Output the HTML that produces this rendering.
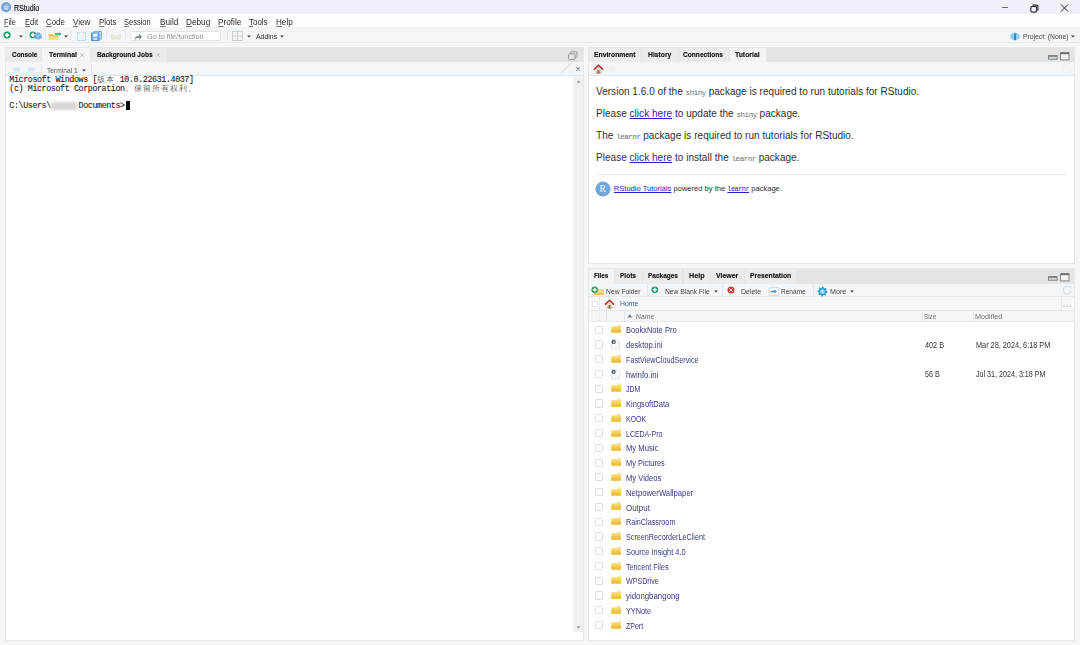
<!DOCTYPE html>
<html><head><meta charset="utf-8">
<style>
*{box-sizing:border-box;margin:0;padding:0}
html,body{width:1080px;height:645px;overflow:hidden;background:#f5f6f7;font-family:"Liberation Sans",sans-serif;color:#222;position:relative}
.a{position:absolute}
svg.a{overflow:visible}
.t{position:absolute;white-space:nowrap;transform-origin:0 0}
u{text-decoration:underline;text-decoration-thickness:0.5px;text-underline-offset:0.6px;text-decoration-color:#777}
.cjk{font-family:"Liberation Serif",serif;color:#6e6e6e;font-size:8.2px;letter-spacing:1.06px;-webkit-text-stroke:0}
.lnk{color:#2323c8;text-decoration:underline}
.gm{font-family:"Liberation Mono",monospace;color:#6a6a6a;font-size:7.5px;letter-spacing:-0.45px}
.gml{font-family:"Liberation Mono",monospace;font-size:6.9px;letter-spacing:-0.5px}
</style></head><body>
<div class="a" style="left:0px;top:0px;width:1080px;height:14px;background:#eef1fa"></div>
<svg class="a" style="left:1px;top:2px" width="11" height="11" viewBox="0 0 11 11"><circle cx="5.1" cy="5.2" r="5" fill="#6a9fd6"/><circle cx="5.1" cy="5.2" r="3.3" fill="#8fb8e4"/><text x="3.2" y="7.6" font-size="6" fill="#e8f0fa" font-family="Liberation Sans">R</text></svg>
<div class="a" style="left:1002px;top:7px;width:6px;height:1px;background:#6a6a6a"></div>
<svg class="a" style="left:1030px;top:3.5px" width="9" height="9" viewBox="0 0 9 9"><rect x="0.8" y="2.3" width="5.8" height="5.8" rx="1.4" fill="none" stroke="#333" stroke-width="1.2"/><path d="M2.5 1.2 L6.5 1.2 Q7.9 1.2 7.9 2.6 L7.9 6.5" fill="none" stroke="#333" stroke-width="1.2"/></svg>
<svg class="a" style="left:1060px;top:3.5px" width="9" height="8" viewBox="0 0 9 8"><path d="M1 0.5 L8 7.5 M8 0.5 L1 7.5" stroke="#222" stroke-width="1"/></svg>
<div class="a" style="left:0px;top:14px;width:1080px;height:12.5px;background:#fefefe"></div>
<div class="a" style="left:0px;top:26.5px;width:1080px;height:16.2px;background:#f3f5f6;border-bottom:1px solid #e6e8eb"></div>
<svg class="a" style="left:3.4px;top:30.6px" width="8.2" height="8.2" viewBox="0 0 8.2 8.2"><circle cx="4.1" cy="4.1" r="3.6" fill="#1e9a68"/><path d="M4.1 1.9399999999999995 L4.1 6.26 M1.9399999999999995 4.1 L6.26 4.1" stroke="#fff" stroke-width="1.80"/></svg>
<svg class="a" style="left:18.9px;top:34.8px" width="4" height="3" viewBox="0 0 4 3"><path d="M0.2 0.5 L3.8 0.5 L2 2.5 Z" fill="#333"/></svg>
<div class="a" style="left:25.3px;top:30px;width:1px;height:10px;background:#f0dfe4"></div>
<svg class="a" style="left:28.700000000000003px;top:30.5px" width="7.8" height="7.8" viewBox="0 0 7.8 7.8"><circle cx="3.9" cy="3.9" r="3.4" fill="#1e9a68"/><path d="M3.9 1.8599999999999999 L3.9 5.9399999999999995 M1.8599999999999999 3.9 L5.9399999999999995 3.9" stroke="#fff" stroke-width="1.70"/></svg>
<svg class="a" style="left:34px;top:32.3px" width="8" height="8" viewBox="0 0 8 8"><path d="M4 0.3 L7.6 2 L7.6 6 L4 7.7 L0.4 6 L0.4 2 Z" fill="#6fa8dc"/><path d="M4 3.8 L7.6 2 M4 3.8 L0.4 2 M4 3.8 L4 7.7" stroke="#c9e0f5" stroke-width="0.7"/></svg>
<div class="a" style="left:44.7px;top:30px;width:1px;height:10px;background:#e2e6ea"></div>
<svg class="a" style="left:48px;top:31.8px" width="14" height="8" viewBox="0 0 14 8"><path d="M0.8 2 L4.5 2 L5.5 3 L10 3 L10 7.5 L0.8 7.5 Z" fill="#f0c85a"/><path d="M0.5 7.5 L2.5 4.2 L11.5 4.2 L10 7.5 Z" fill="#f7dd86"/><path d="M7 2 L11.8 2" stroke="#2bab6e" stroke-width="1.6"/><path d="M11 0.3 L13.6 2 L11 3.7 Z" fill="#2bab6e"/></svg>
<svg class="a" style="left:64.1px;top:34.8px" width="4" height="3" viewBox="0 0 4 3"><path d="M0.2 0.5 L3.8 0.5 L2 2.5 Z" fill="#333"/></svg>
<div class="a" style="left:70.3px;top:30px;width:1px;height:10px;background:#e2e6ea"></div>
<svg class="a" style="left:76.5px;top:31.5px" width="9" height="9" viewBox="0 0 9 9"><rect x="0.5" y="0.5" width="8" height="8" fill="#eef5fb" stroke="#c3d9ec"/><rect x="2.3" y="0.5" width="4.4" height="3" fill="#fff" stroke="#d3e3f1" stroke-width="0.6"/></svg>
<svg class="a" style="left:90.5px;top:31px" width="11" height="10" viewBox="0 0 11 10"><rect x="3" y="0.5" width="7.5" height="7.5" fill="#b9d8f2" stroke="#6aa5dc" stroke-width="0.8"/><rect x="0.5" y="2" width="7.5" height="7.5" fill="#79b0e3" stroke="#4f8fcf" stroke-width="0.9"/><rect x="2.2" y="2.6" width="4.2" height="3" fill="#f4f9fd"/><rect x="2.5" y="7" width="3.5" height="2" fill="#cfe3f5"/></svg>
<div class="a" style="left:105.6px;top:30px;width:1px;height:10px;background:#e2e6ea"></div>
<svg class="a" style="left:111px;top:32px" width="10" height="8" viewBox="0 0 10 8"><rect x="0.5" y="2.5" width="9" height="4.5" fill="#eceae0" stroke="#e0ddd0" stroke-width="0.6"/><rect x="2" y="0.5" width="6" height="2.5" fill="#f5f4ee"/></svg>
<div class="a" style="left:124.8px;top:30px;width:1px;height:10px;background:#e2e6ea"></div>
<div class="a" style="left:129.5px;top:30.8px;width:91.5px;height:10.4px;background:#fff;border:1px solid #e3e6e9;border-radius:2px"></div>
<svg class="a" style="left:133.5px;top:32.5px" width="8.5" height="7.5" viewBox="0 0 8.5 7.5"><path d="M0.5 7 Q1 2.8 5 2.8 L5 0.5 L8.2 3.8 L5 7 L5 4.8 Q2.2 4.8 0.5 7 Z" fill="#808a94"/></svg>
<div class="a" style="left:226.7px;top:30px;width:1px;height:10px;background:#e2e6ea"></div>
<svg class="a" style="left:231.5px;top:31px" width="11" height="10" viewBox="0 0 11 10"><rect x="0.5" y="0.5" width="10" height="9" fill="#f2f4f6" stroke="#c9ced3"/><path d="M5.5 0.5 L5.5 9.5 M0.5 5 L10.5 5" stroke="#c9ced3"/></svg>
<svg class="a" style="left:246.6px;top:34.8px" width="4" height="3" viewBox="0 0 4 3"><path d="M0.2 0.5 L3.8 0.5 L2 2.5 Z" fill="#333"/></svg>
<svg class="a" style="left:280.4px;top:34.8px" width="4" height="3" viewBox="0 0 4 3"><path d="M0.2 0.5 L3.8 0.5 L2 2.5 Z" fill="#333"/></svg>
<svg class="a" style="left:1009.5px;top:31.5px" width="10" height="9" viewBox="0 0 10 9"><path d="M5 0.3 L9.6 2.4 L9.6 6.6 L5 8.7 L0.4 6.6 L0.4 2.4 Z" fill="#8fd0ee"/><path d="M4 1.5 L6 1.5 L6 8 L4 8 Z" fill="#3f80c8"/></svg>
<svg class="a" style="left:1071.3px;top:35px" width="4" height="3" viewBox="0 0 4 3"><path d="M0.2 0.5 L3.8 0.5 L2 2.5 Z" fill="#333"/></svg>
<div class="a" style="left:5px;top:47px;width:579px;height:594px;background:#fff;border:1px solid #e6e8ea"></div>
<div class="a" style="left:6px;top:48px;width:577px;height:14px;background:#e3e4e6"></div>
<div class="a" style="left:6px;top:48px;width:34.5px;height:14px;background:#ebebec"></div>
<div class="a" style="left:42.3px;top:48px;width:47.7px;height:14px;background:#f3f4f5"></div>
<div class="a" style="left:91.3px;top:48px;width:75.7px;height:14px;background:#ebebec"></div>
<svg class="a" style="left:80.3px;top:52.5px" width="4" height="4" viewBox="0 0 4 4"><path d="M0.3 0.3 L3.7 3.7 M3.7 0.3 L0.3 3.7" stroke="#b5b5b5" stroke-width="0.8"/></svg>
<svg class="a" style="left:156.3px;top:52.5px" width="4" height="4" viewBox="0 0 4 4"><path d="M0.3 0.3 L3.7 3.7 M3.7 0.3 L0.3 3.7" stroke="#b5b5b5" stroke-width="0.8"/></svg>
<svg class="a" style="left:568px;top:51px" width="10" height="10" viewBox="0 0 10 10"><rect x="2.5" y="0.8" width="6.5" height="5.5" rx="0.8" fill="none" stroke="#8a8a8a" stroke-width="0.9"/><rect x="0.6" y="2.8" width="6.5" height="5.8" rx="0.8" fill="#e3e4e6" stroke="#8a8a8a" stroke-width="0.9"/></svg>
<div class="a" style="left:6px;top:62px;width:577px;height:13.5px;background:#f3f6f8;border-bottom:1px solid #e3e7ea"></div>
<svg class="a" style="left:11.5px;top:66.5px" width="9" height="5" viewBox="0 0 9 5"><ellipse cx="4.5" cy="2.5" rx="4" ry="2.3" fill="#d8e7f4"/></svg>
<svg class="a" style="left:26.5px;top:66.5px" width="9" height="5" viewBox="0 0 9 5"><ellipse cx="4.5" cy="2.5" rx="4" ry="2.3" fill="#d8e7f4"/></svg>
<div class="a" style="left:40.8px;top:63.5px;width:1px;height:11px;background:#e2e6ea"></div>
<svg class="a" style="left:82px;top:69px" width="4" height="3" viewBox="0 0 4 3"><path d="M0.2 0.5 L3.8 0.5 L2 2.5 Z" fill="#333"/></svg>
<div class="a" style="left:90.8px;top:63.5px;width:1px;height:11px;background:#e2e6ea"></div>
<svg class="a" style="left:559.5px;top:62px" width="13" height="12" viewBox="0 0 13 12"><path d="M1.5 10.8 L11.5 1" stroke="#dfe2e5" stroke-width="1.6"/><path d="M0.5 11.5 L3.5 8.5 L4.5 9.8 Z" fill="#e3e6e9"/></svg>
<svg class="a" style="left:576px;top:67px" width="4" height="4" viewBox="0 0 4 4"><path d="M0.4 0.4 L3.6 3.6 M3.6 0.4 L0.4 3.6" stroke="#7a7a7a" stroke-width="1.1"/></svg>
<div class="t" style="left:9.3px;top:76.11px;font-family:'Liberation Mono',monospace;font-size:8.4px;letter-spacing:-0.41px;line-height:8.5px;color:#1a1a1a;-webkit-text-stroke:0.1px #1a1a1a">Microsoft Windows [<span class="cjk">版本</span> 10.0.22631.4037]<br>(c) Microsoft Corporation<span class="cjk">。保留所有权利。</span><br><br>C:\Users\<span style="color:transparent;-webkit-text-stroke:0">xxxxxx</span>Documents&gt;</div>
<div class="a" style="left:50.5px;top:101.8px;width:26.5px;height:8px;background:#d6d6d6;filter:blur(1.5px)"></div>
<div class="a" style="left:125.6px;top:100.7px;width:4.6px;height:9px;background:#000"></div>
<div class="a" style="left:572.8px;top:76px;width:10.5px;height:556px;background:#f0f0f0"></div>
<svg class="a" style="left:575.8px;top:79.5px" width="5" height="3" viewBox="0 0 5 3"><path d="M0.5 2.8 L4.5 2.8 L2.5 0.3 Z" fill="#9a9a9a"/></svg>
<svg class="a" style="left:575.8px;top:625.5px" width="5" height="3" viewBox="0 0 5 3"><path d="M0.5 0.3 L4.5 0.3 L2.5 2.8 Z" fill="#9a9a9a"/></svg>
<div class="a" style="left:588px;top:47px;width:487px;height:217px;background:#fff;border:1px solid #e6e8ea"></div>
<div class="a" style="left:589px;top:48px;width:485px;height:14px;background:#e3e4e6"></div>
<div class="a" style="left:589px;top:48px;width:51.6px;height:14px;background:#ebebec"></div>
<div class="a" style="left:641.5px;top:48px;width:36px;height:14px;background:#ebebec"></div>
<div class="a" style="left:678.5px;top:48px;width:50.8px;height:14px;background:#ebebec"></div>
<div class="a" style="left:730.4px;top:48px;width:35.6px;height:14px;background:#f3f4f5"></div>
<svg class="a" style="left:1048px;top:55.0px" width="10" height="5" viewBox="0 0 10 5"><rect x="0.5" y="0.7" width="8.6" height="3.5" fill="#d9d9d9" stroke="#7a7a7a" stroke-width="0.9"/><rect x="0.5" y="0.5" width="8.6" height="1.2" fill="#6e6e6e"/></svg>
<svg class="a" style="left:1059.5px;top:51.5px" width="10" height="8.5" viewBox="0 0 10 8.5"><rect x="0.6" y="0.6" width="8.4" height="7.3" fill="#f3f3f3" stroke="#7a7a7a" stroke-width="0.9"/><rect x="0.6" y="0.6" width="8.4" height="1.6" fill="#6e6e6e"/></svg>
<div class="a" style="left:589px;top:62px;width:485px;height:13.5px;background:#f3f6f8;border-bottom:1px solid #e3e7ea"></div>
<svg class="a" style="left:593px;top:63.5px" width="11" height="10" viewBox="0 0 11 10"><path d="M2.6 5.2 L5.5 2.6 L8.4 5.2 L8.4 9.6 L2.6 9.6 Z" fill="#ddd8d0"/><path d="M2.6 8 L8.4 8 L8.4 9.6 L2.6 9.6 Z" fill="#c9c3bb"/><rect x="4.5" y="6.2" width="2" height="3.4" fill="#94602c"/><path d="M0.9 5.6 L5.5 1.2 L10.1 5.6" fill="none" stroke="#c62f2a" stroke-width="1.5" stroke-linejoin="miter"/></svg>
<svg class="a" style="left:608px;top:65px" width="8" height="8" viewBox="0 0 8 8"><circle cx="4" cy="4" r="3.5" fill="#eef0f2"/></svg>
<svg class="a" style="left:1062px;top:64.5px" width="9" height="9" viewBox="0 0 9 9"><circle cx="4.5" cy="4.5" r="3.8" fill="none" stroke="#eceff2" stroke-width="1.2"/></svg>
<div class="t" style="left:596px;top:86.25px;font-size:10px;line-height:11.49px;color:#2f2f2f;letter-spacing:0.03px">Version 1.6.0 of the <span class="gm">shiny</span> package is required to run tutorials for RStudio.</div>
<div class="t" style="left:596px;top:108.25px;font-size:10px;line-height:11.49px;color:#2f2f2f;letter-spacing:0.03px">Please <span class="lnk">click here</span> to update the <span class="gm">shiny</span> package.</div>
<div class="t" style="left:596px;top:130.25px;font-size:10px;line-height:11.49px;color:#2f2f2f;letter-spacing:0.03px">The <span class="gm">learnr</span> package is required to run tutorials for RStudio.</div>
<div class="t" style="left:596px;top:152.25px;font-size:10px;line-height:11.49px;color:#2f2f2f;letter-spacing:0.03px">Please <span class="lnk">click here</span> to install the <span class="gm">learnr</span> package.</div>
<div class="a" style="left:596px;top:173.5px;width:471px;height:1px;background:#ebebeb"></div>
<svg class="a" style="left:595.3px;top:181px" width="16" height="16" viewBox="0 0 16 16"><circle cx="8" cy="8" r="7.6" fill="#75a6da"/><text x="4.6" y="11.4" font-size="9.5" fill="#f4f8fc" font-family="Liberation Serif">R</text></svg>
<div class="t" style="left:613.8px;top:184.75px;font-size:7.57px;line-height:8.7px;color:#2f2f2f"><span class="lnk">RStudio Tutorials</span> powered by the <span class="lnk gml">learnr</span> package.</div>
<div class="a" style="left:588px;top:268px;width:487px;height:373px;background:#fff;border:1px solid #e6e8ea"></div>
<div class="a" style="left:589px;top:269px;width:485px;height:14.5px;background:#e3e4e6"></div>
<div class="a" style="left:589px;top:269px;width:24.5px;height:14.5px;background:#f3f4f5"></div>
<div class="a" style="left:614.8px;top:269px;width:27.2px;height:14.5px;background:#ebebec"></div>
<div class="a" style="left:643.3px;top:269px;width:39px;height:14.5px;background:#ebebec"></div>
<div class="a" style="left:683.5px;top:269px;width:26px;height:14.5px;background:#ebebec"></div>
<div class="a" style="left:710.7px;top:269px;width:33px;height:14.5px;background:#ebebec"></div>
<div class="a" style="left:745px;top:269px;width:51.3px;height:14.5px;background:#ebebec"></div>
<svg class="a" style="left:1048px;top:276.0px" width="10" height="5" viewBox="0 0 10 5"><rect x="0.5" y="0.7" width="8.6" height="3.5" fill="#d9d9d9" stroke="#7a7a7a" stroke-width="0.9"/><rect x="0.5" y="0.5" width="8.6" height="1.2" fill="#6e6e6e"/></svg>
<svg class="a" style="left:1059.5px;top:272.5px" width="10" height="8.5" viewBox="0 0 10 8.5"><rect x="0.6" y="0.6" width="8.4" height="7.3" fill="#f3f3f3" stroke="#7a7a7a" stroke-width="0.9"/><rect x="0.6" y="0.6" width="8.4" height="1.6" fill="#6e6e6e"/></svg>
<div class="a" style="left:589px;top:283.5px;width:485px;height:13px;background:#f3f6f8;border-bottom:1px solid #e6e9ec"></div>
<svg class="a" style="left:593.8px;top:287.6px" width="10.5" height="7.5" viewBox="0 0 10.5 7.5"><path d="M0.5 0.5 L4 0.5 L5 1.5 L10 1.5 L10 7 L0.5 7 Z" fill="#e9c867"/><path d="M0.5 2.5 L10 2.5 L10 7 L0.5 7 Z" fill="#f6dc8a"/><path d="M0.5 5 L10 5 L10 7 L0.5 7 Z" fill="#f0c24a"/></svg>
<svg class="a" style="left:591.3px;top:286.1px" width="7.4" height="7.4" viewBox="0 0 7.4 7.4"><circle cx="3.7" cy="3.7" r="3.2" fill="#1e9a68"/><path d="M3.7 1.7800000000000002 L3.7 5.62 M1.7800000000000002 3.7 L5.62 3.7" stroke="#fff" stroke-width="1.60"/></svg>
<div class="a" style="left:646.6px;top:284.5px;width:1px;height:11px;background:#e2e6ea"></div>
<svg class="a" style="left:651.2px;top:286.2px" width="7.6" height="7.6" viewBox="0 0 7.6 7.6"><circle cx="3.8" cy="3.8" r="3.3" fill="#1e9a68"/><path d="M3.8 1.82 L3.8 5.779999999999999 M1.82 3.8 L5.779999999999999 3.8" stroke="#fff" stroke-width="1.65"/></svg>
<svg class="a" style="left:714.2px;top:290px" width="4" height="3" viewBox="0 0 4 3"><path d="M0.2 0.5 L3.8 0.5 L2 2.5 Z" fill="#333"/></svg>
<div class="a" style="left:722.4px;top:284.5px;width:1px;height:11px;background:#e2e6ea"></div>
<svg class="a" style="left:726.5px;top:286px" width="8" height="8" viewBox="0 0 8 8"><circle cx="4" cy="4" r="3.5" fill="#d33a35"/><path d="M2.5 2.5 L5.5 5.5 M5.5 2.5 L2.5 5.5" stroke="#fff" stroke-width="1"/></svg>
<svg class="a" style="left:768.5px;top:287px" width="10" height="9" viewBox="0 0 10 9"><rect x="0.5" y="0.5" width="9" height="8" fill="#f4f6f8" stroke="#d3d8dc" stroke-width="0.8"/><path d="M2 4.5 L6 4.5" stroke="#2a8fdc" stroke-width="1.4"/><path d="M5.5 2.8 L7.8 4.5 L5.5 6.2 Z" fill="#2a8fdc"/></svg>
<div class="a" style="left:812.6px;top:284.5px;width:1px;height:11px;background:#e2e6ea"></div>
<svg class="a" style="left:817.2px;top:285.5px" width="11" height="11" viewBox="0 0 11 11"><path d="M5.50 0.50 L6.48 0.60 L6.99 1.90 L7.67 2.26 L9.04 1.96 L9.66 2.72 L9.10 4.01 L9.33 4.74 L10.50 5.50 L10.40 6.48 L9.10 6.99 L8.74 7.67 L9.04 9.04 L8.28 9.66 L6.99 9.10 L6.26 9.33 L5.50 10.50 L4.52 10.40 L4.01 9.10 L3.33 8.74 L1.96 9.04 L1.34 8.28 L1.90 6.99 L1.67 6.26 L0.50 5.50 L0.60 4.52 L1.90 4.01 L2.26 3.33 L1.96 1.96 L2.72 1.34 L4.01 1.90 L4.74 1.67 Z" fill="#2b9ccc"/><circle cx="5.5" cy="5.5" r="2.6" fill="#7fcbea"/><circle cx="5.5" cy="5.5" r="1.2" fill="#d5eef8"/></svg>
<svg class="a" style="left:850.2px;top:290px" width="4" height="3" viewBox="0 0 4 3"><path d="M0.2 0.5 L3.8 0.5 L2 2.5 Z" fill="#333"/></svg>
<svg class="a" style="left:1061.5px;top:285px" width="10.5" height="10.5" viewBox="0 0 10.5 10.5"><path d="M8.8 3 A4 4 0 1 0 9.2 6.2" fill="none" stroke="#d7dee6" stroke-width="1.3"/><path d="M7.3 1.2 L9.8 1.5 L9.2 4 Z" fill="#d7dee6"/></svg>
<div class="a" style="left:589px;top:296.5px;width:485px;height:14px;background:#f5f7f9;border-bottom:1px solid #e6e9ec"></div>
<div class="a" style="left:592px;top:300.8px;width:6.2px;height:6.5px;background:#fff;border:1px solid #e3e3e3;border-radius:1px"></div>
<svg class="a" style="left:603.5px;top:298.5px" width="11" height="10" viewBox="0 0 11 10"><path d="M2.6 5.2 L5.5 2.6 L8.4 5.2 L8.4 9.6 L2.6 9.6 Z" fill="#ddd8d0"/><path d="M2.6 8 L8.4 8 L8.4 9.6 L2.6 9.6 Z" fill="#c9c3bb"/><rect x="4.5" y="6.2" width="2" height="3.4" fill="#94602c"/><path d="M0.9 5.6 L5.5 1.2 L10.1 5.6" fill="none" stroke="#c62f2a" stroke-width="1.5" stroke-linejoin="miter"/></svg>
<div class="a" style="left:1060.8px;top:297px;width:1px;height:13px;background:#e6e9ec"></div>
<svg class="a" style="left:1063px;top:304.5px" width="9" height="2" viewBox="0 0 9 2"><circle cx="1" cy="1" r="0.6" fill="#888"/><circle cx="4" cy="1" r="0.6" fill="#888"/><circle cx="7" cy="1" r="0.6" fill="#888"/></svg>
<div class="a" style="left:589px;top:310.5px;width:485px;height:11.8px;background:#f3f6f8;border-bottom:1px solid #e6e9ec"></div>
<div class="a" style="left:606.3px;top:310.5px;width:1px;height:11px;background:#e3e6e9"></div>
<div class="a" style="left:623.5px;top:310.5px;width:1px;height:11px;background:#e3e6e9"></div>
<div class="a" style="left:922.3px;top:310.5px;width:1px;height:11px;background:#e3e6e9"></div>
<div class="a" style="left:973px;top:310.5px;width:1px;height:11px;background:#e3e6e9"></div>
<div class="a" style="left:598.5px;top:297px;width:1px;height:24px;background:#e8ebee"></div>
<svg class="a" style="left:627px;top:314.3px" width="5.5" height="4" viewBox="0 0 5.5 4"><path d="M0.3 3.6 L5.2 3.6 L2.75 0.3 Z" fill="#7a7f85"/></svg>
<div class="a" style="left:595.2px;top:325.6px;width:8.2px;height:8.2px;background:#fff;border:1px solid #dcdcdc;border-radius:1.2px"></div>
<svg class="a" style="left:610.5px;top:324.2px" width="10.5" height="9.5" viewBox="0 0 10.5 9.5"><path d="M5.5 2 L6.5 0.4 L9.8 0.4 L9.8 2.5 Z" fill="#efe6c8"/><path d="M0.3 2.3 L9.9 2.3 L9.9 8.8 L0.3 8.8 Z" fill="#f6d466"/><path d="M0.3 5.2 L9.9 5.2 L9.9 8.8 L0.3 8.8 Z" fill="#eec248"/></svg>
<div class="a" style="left:595.2px;top:340.37px;width:8.2px;height:8.2px;background:#fff;border:1px solid #dcdcdc;border-radius:1.2px"></div>
<svg class="a" style="left:611px;top:339.17px" width="9" height="10.5" viewBox="0 0 9 10.5"><path d="M0.5 0.5 L6 0.5 L8.5 3 L8.5 10 L0.5 10 Z" fill="#f7f8fa" stroke="#d9dee3" stroke-width="0.8"/><circle cx="2.7" cy="2.9" r="2.1" fill="#3d5f78"/><circle cx="2.9" cy="2.9" r="0.9" fill="#b9d6ea"/></svg>
<div class="a" style="left:595.2px;top:355.14px;width:8.2px;height:8.2px;background:#fff;border:1px solid #dcdcdc;border-radius:1.2px"></div>
<svg class="a" style="left:610.5px;top:353.74px" width="10.5" height="9.5" viewBox="0 0 10.5 9.5"><path d="M5.5 2 L6.5 0.4 L9.8 0.4 L9.8 2.5 Z" fill="#efe6c8"/><path d="M0.3 2.3 L9.9 2.3 L9.9 8.8 L0.3 8.8 Z" fill="#f6d466"/><path d="M0.3 5.2 L9.9 5.2 L9.9 8.8 L0.3 8.8 Z" fill="#eec248"/></svg>
<div class="a" style="left:595.2px;top:369.91px;width:8.2px;height:8.2px;background:#fff;border:1px solid #dcdcdc;border-radius:1.2px"></div>
<svg class="a" style="left:611px;top:368.71px" width="9" height="10.5" viewBox="0 0 9 10.5"><path d="M0.5 0.5 L6 0.5 L8.5 3 L8.5 10 L0.5 10 Z" fill="#f7f8fa" stroke="#d9dee3" stroke-width="0.8"/><circle cx="2.7" cy="2.9" r="2.1" fill="#3d5f78"/><circle cx="2.9" cy="2.9" r="0.9" fill="#b9d6ea"/></svg>
<div class="a" style="left:595.2px;top:384.68px;width:8.2px;height:8.2px;background:#fff;border:1px solid #dcdcdc;border-radius:1.2px"></div>
<svg class="a" style="left:610.5px;top:383.28px" width="10.5" height="9.5" viewBox="0 0 10.5 9.5"><path d="M5.5 2 L6.5 0.4 L9.8 0.4 L9.8 2.5 Z" fill="#efe6c8"/><path d="M0.3 2.3 L9.9 2.3 L9.9 8.8 L0.3 8.8 Z" fill="#f6d466"/><path d="M0.3 5.2 L9.9 5.2 L9.9 8.8 L0.3 8.8 Z" fill="#eec248"/></svg>
<div class="a" style="left:595.2px;top:399.45px;width:8.2px;height:8.2px;background:#fff;border:1px solid #dcdcdc;border-radius:1.2px"></div>
<svg class="a" style="left:610.5px;top:398.05px" width="10.5" height="9.5" viewBox="0 0 10.5 9.5"><path d="M5.5 2 L6.5 0.4 L9.8 0.4 L9.8 2.5 Z" fill="#efe6c8"/><path d="M0.3 2.3 L9.9 2.3 L9.9 8.8 L0.3 8.8 Z" fill="#f6d466"/><path d="M0.3 5.2 L9.9 5.2 L9.9 8.8 L0.3 8.8 Z" fill="#eec248"/></svg>
<div class="a" style="left:595.2px;top:414.22px;width:8.2px;height:8.2px;background:#fff;border:1px solid #dcdcdc;border-radius:1.2px"></div>
<svg class="a" style="left:610.5px;top:412.82px" width="10.5" height="9.5" viewBox="0 0 10.5 9.5"><path d="M5.5 2 L6.5 0.4 L9.8 0.4 L9.8 2.5 Z" fill="#efe6c8"/><path d="M0.3 2.3 L9.9 2.3 L9.9 8.8 L0.3 8.8 Z" fill="#f6d466"/><path d="M0.3 5.2 L9.9 5.2 L9.9 8.8 L0.3 8.8 Z" fill="#eec248"/></svg>
<div class="a" style="left:595.2px;top:428.99px;width:8.2px;height:8.2px;background:#fff;border:1px solid #dcdcdc;border-radius:1.2px"></div>
<svg class="a" style="left:610.5px;top:427.59px" width="10.5" height="9.5" viewBox="0 0 10.5 9.5"><path d="M5.5 2 L6.5 0.4 L9.8 0.4 L9.8 2.5 Z" fill="#efe6c8"/><path d="M0.3 2.3 L9.9 2.3 L9.9 8.8 L0.3 8.8 Z" fill="#f6d466"/><path d="M0.3 5.2 L9.9 5.2 L9.9 8.8 L0.3 8.8 Z" fill="#eec248"/></svg>
<div class="a" style="left:595.2px;top:443.76px;width:8.2px;height:8.2px;background:#fff;border:1px solid #dcdcdc;border-radius:1.2px"></div>
<svg class="a" style="left:610.5px;top:442.36px" width="10.5" height="9.5" viewBox="0 0 10.5 9.5"><path d="M5.5 2 L6.5 0.4 L9.8 0.4 L9.8 2.5 Z" fill="#efe6c8"/><path d="M0.3 2.3 L9.9 2.3 L9.9 8.8 L0.3 8.8 Z" fill="#f6d466"/><path d="M0.3 5.2 L9.9 5.2 L9.9 8.8 L0.3 8.8 Z" fill="#eec248"/></svg>
<div class="a" style="left:595.2px;top:458.53px;width:8.2px;height:8.2px;background:#fff;border:1px solid #dcdcdc;border-radius:1.2px"></div>
<svg class="a" style="left:610.5px;top:457.13px" width="10.5" height="9.5" viewBox="0 0 10.5 9.5"><path d="M5.5 2 L6.5 0.4 L9.8 0.4 L9.8 2.5 Z" fill="#efe6c8"/><path d="M0.3 2.3 L9.9 2.3 L9.9 8.8 L0.3 8.8 Z" fill="#f6d466"/><path d="M0.3 5.2 L9.9 5.2 L9.9 8.8 L0.3 8.8 Z" fill="#eec248"/></svg>
<div class="a" style="left:595.2px;top:473.3px;width:8.2px;height:8.2px;background:#fff;border:1px solid #dcdcdc;border-radius:1.2px"></div>
<svg class="a" style="left:610.5px;top:471.9px" width="10.5" height="9.5" viewBox="0 0 10.5 9.5"><path d="M5.5 2 L6.5 0.4 L9.8 0.4 L9.8 2.5 Z" fill="#efe6c8"/><path d="M0.3 2.3 L9.9 2.3 L9.9 8.8 L0.3 8.8 Z" fill="#f6d466"/><path d="M0.3 5.2 L9.9 5.2 L9.9 8.8 L0.3 8.8 Z" fill="#eec248"/></svg>
<div class="a" style="left:595.2px;top:488.07px;width:8.2px;height:8.2px;background:#fff;border:1px solid #dcdcdc;border-radius:1.2px"></div>
<svg class="a" style="left:610.5px;top:486.67px" width="10.5" height="9.5" viewBox="0 0 10.5 9.5"><path d="M5.5 2 L6.5 0.4 L9.8 0.4 L9.8 2.5 Z" fill="#efe6c8"/><path d="M0.3 2.3 L9.9 2.3 L9.9 8.8 L0.3 8.8 Z" fill="#f6d466"/><path d="M0.3 5.2 L9.9 5.2 L9.9 8.8 L0.3 8.8 Z" fill="#eec248"/></svg>
<div class="a" style="left:595.2px;top:502.84px;width:8.2px;height:8.2px;background:#fff;border:1px solid #dcdcdc;border-radius:1.2px"></div>
<svg class="a" style="left:610.5px;top:501.44px" width="10.5" height="9.5" viewBox="0 0 10.5 9.5"><path d="M5.5 2 L6.5 0.4 L9.8 0.4 L9.8 2.5 Z" fill="#efe6c8"/><path d="M0.3 2.3 L9.9 2.3 L9.9 8.8 L0.3 8.8 Z" fill="#f6d466"/><path d="M0.3 5.2 L9.9 5.2 L9.9 8.8 L0.3 8.8 Z" fill="#eec248"/></svg>
<div class="a" style="left:595.2px;top:517.61px;width:8.2px;height:8.2px;background:#fff;border:1px solid #dcdcdc;border-radius:1.2px"></div>
<svg class="a" style="left:610.5px;top:516.21px" width="10.5" height="9.5" viewBox="0 0 10.5 9.5"><path d="M5.5 2 L6.5 0.4 L9.8 0.4 L9.8 2.5 Z" fill="#efe6c8"/><path d="M0.3 2.3 L9.9 2.3 L9.9 8.8 L0.3 8.8 Z" fill="#f6d466"/><path d="M0.3 5.2 L9.9 5.2 L9.9 8.8 L0.3 8.8 Z" fill="#eec248"/></svg>
<div class="a" style="left:595.2px;top:532.38px;width:8.2px;height:8.2px;background:#fff;border:1px solid #dcdcdc;border-radius:1.2px"></div>
<svg class="a" style="left:610.5px;top:530.98px" width="10.5" height="9.5" viewBox="0 0 10.5 9.5"><path d="M5.5 2 L6.5 0.4 L9.8 0.4 L9.8 2.5 Z" fill="#efe6c8"/><path d="M0.3 2.3 L9.9 2.3 L9.9 8.8 L0.3 8.8 Z" fill="#f6d466"/><path d="M0.3 5.2 L9.9 5.2 L9.9 8.8 L0.3 8.8 Z" fill="#eec248"/></svg>
<div class="a" style="left:595.2px;top:547.15px;width:8.2px;height:8.2px;background:#fff;border:1px solid #dcdcdc;border-radius:1.2px"></div>
<svg class="a" style="left:610.5px;top:545.75px" width="10.5" height="9.5" viewBox="0 0 10.5 9.5"><path d="M5.5 2 L6.5 0.4 L9.8 0.4 L9.8 2.5 Z" fill="#efe6c8"/><path d="M0.3 2.3 L9.9 2.3 L9.9 8.8 L0.3 8.8 Z" fill="#f6d466"/><path d="M0.3 5.2 L9.9 5.2 L9.9 8.8 L0.3 8.8 Z" fill="#eec248"/></svg>
<div class="a" style="left:595.2px;top:561.92px;width:8.2px;height:8.2px;background:#fff;border:1px solid #dcdcdc;border-radius:1.2px"></div>
<svg class="a" style="left:610.5px;top:560.52px" width="10.5" height="9.5" viewBox="0 0 10.5 9.5"><path d="M5.5 2 L6.5 0.4 L9.8 0.4 L9.8 2.5 Z" fill="#efe6c8"/><path d="M0.3 2.3 L9.9 2.3 L9.9 8.8 L0.3 8.8 Z" fill="#f6d466"/><path d="M0.3 5.2 L9.9 5.2 L9.9 8.8 L0.3 8.8 Z" fill="#eec248"/></svg>
<div class="a" style="left:595.2px;top:576.69px;width:8.2px;height:8.2px;background:#fff;border:1px solid #dcdcdc;border-radius:1.2px"></div>
<svg class="a" style="left:610.5px;top:575.29px" width="10.5" height="9.5" viewBox="0 0 10.5 9.5"><path d="M5.5 2 L6.5 0.4 L9.8 0.4 L9.8 2.5 Z" fill="#efe6c8"/><path d="M0.3 2.3 L9.9 2.3 L9.9 8.8 L0.3 8.8 Z" fill="#f6d466"/><path d="M0.3 5.2 L9.9 5.2 L9.9 8.8 L0.3 8.8 Z" fill="#eec248"/></svg>
<div class="a" style="left:595.2px;top:591.46px;width:8.2px;height:8.2px;background:#fff;border:1px solid #dcdcdc;border-radius:1.2px"></div>
<svg class="a" style="left:610.5px;top:590.06px" width="10.5" height="9.5" viewBox="0 0 10.5 9.5"><path d="M5.5 2 L6.5 0.4 L9.8 0.4 L9.8 2.5 Z" fill="#efe6c8"/><path d="M0.3 2.3 L9.9 2.3 L9.9 8.8 L0.3 8.8 Z" fill="#f6d466"/><path d="M0.3 5.2 L9.9 5.2 L9.9 8.8 L0.3 8.8 Z" fill="#eec248"/></svg>
<div class="a" style="left:595.2px;top:606.23px;width:8.2px;height:8.2px;background:#fff;border:1px solid #dcdcdc;border-radius:1.2px"></div>
<svg class="a" style="left:610.5px;top:604.83px" width="10.5" height="9.5" viewBox="0 0 10.5 9.5"><path d="M5.5 2 L6.5 0.4 L9.8 0.4 L9.8 2.5 Z" fill="#efe6c8"/><path d="M0.3 2.3 L9.9 2.3 L9.9 8.8 L0.3 8.8 Z" fill="#f6d466"/><path d="M0.3 5.2 L9.9 5.2 L9.9 8.8 L0.3 8.8 Z" fill="#eec248"/></svg>
<div class="a" style="left:595.2px;top:621.0px;width:8.2px;height:8.2px;background:#fff;border:1px solid #dcdcdc;border-radius:1.2px"></div>
<svg class="a" style="left:610.5px;top:619.6px" width="10.5" height="9.5" viewBox="0 0 10.5 9.5"><path d="M5.5 2 L6.5 0.4 L9.8 0.4 L9.8 2.5 Z" fill="#efe6c8"/><path d="M0.3 2.3 L9.9 2.3 L9.9 8.8 L0.3 8.8 Z" fill="#f6d466"/><path d="M0.3 5.2 L9.9 5.2 L9.9 8.8 L0.3 8.8 Z" fill="#eec248"/></svg>
<div class="t" style="left:13.7px;top:3.13px;font-size:8.7px;line-height:10.00px;color:#1a1a1a;transform:scaleX(0.815);-webkit-text-stroke:0.2px #1a1a1a">RStudio</div>
<div class="t" style="left:4.2px;top:16.94px;font-size:8.8px;line-height:10.11px;color:#2b2b2b;transform:scaleX(0.832)"><u>F</u>ile</div>
<div class="t" style="left:24.7px;top:16.94px;font-size:8.8px;line-height:10.11px;color:#2b2b2b;transform:scaleX(0.864)"><u>E</u>dit</div>
<div class="t" style="left:45.8px;top:16.94px;font-size:8.8px;line-height:10.11px;color:#2b2b2b;transform:scaleX(0.894)"><u>C</u>ode</div>
<div class="t" style="left:72.9px;top:16.94px;font-size:8.8px;line-height:10.11px;color:#2b2b2b;transform:scaleX(0.920)"><u>V</u>iew</div>
<div class="t" style="left:98.6px;top:16.94px;font-size:8.8px;line-height:10.11px;color:#2b2b2b;transform:scaleX(0.890)"><u>P</u>lots</div>
<div class="t" style="left:124.4px;top:16.94px;font-size:8.8px;line-height:10.11px;color:#2b2b2b;transform:scaleX(0.853)"><u>S</u>ession</div>
<div class="t" style="left:159.7px;top:16.94px;font-size:8.8px;line-height:10.11px;color:#2b2b2b;transform:scaleX(0.936)"><u>B</u>uild</div>
<div class="t" style="left:185.8px;top:16.94px;font-size:8.8px;line-height:10.11px;color:#2b2b2b;transform:scaleX(0.934)"><u>D</u>ebug</div>
<div class="t" style="left:217.5px;top:16.94px;font-size:8.8px;line-height:10.11px;color:#2b2b2b;transform:scaleX(0.934)"><u>P</u>rofile</div>
<div class="t" style="left:249px;top:16.94px;font-size:8.8px;line-height:10.11px;color:#2b2b2b;transform:scaleX(0.901)"><u>T</u>ools</div>
<div class="t" style="left:275.8px;top:16.94px;font-size:8.8px;line-height:10.11px;color:#2b2b2b;transform:scaleX(0.923)"><u>H</u>elp</div>
<div class="t" style="left:146.7px;top:32.82px;font-size:7.6px;line-height:8.73px;color:#8c8c8c;transform:scaleX(0.958)">Go to file/function</div>
<div class="t" style="left:255.6px;top:32.72px;font-size:7.6px;line-height:8.73px;color:#2b2b2b;transform:scaleX(0.909)">Addins</div>
<div class="t" style="left:1022.5px;top:32.82px;font-size:7.6px;line-height:8.73px;color:#444;transform:scaleX(0.891)">Project: (None)</div>
<div class="t" style="left:11.5px;top:50.92px;font-size:7.6px;line-height:8.73px;color:#111;transform:scaleX(0.848);font-weight:bold;-webkit-text-stroke:0.15px #111">Console</div>
<div class="t" style="left:49.2px;top:50.92px;font-size:7.6px;line-height:8.73px;color:#111;transform:scaleX(0.894);font-weight:bold;-webkit-text-stroke:0.15px #111">Terminal</div>
<div class="t" style="left:97.2px;top:50.92px;font-size:7.6px;line-height:8.73px;color:#111;transform:scaleX(0.867);font-weight:bold;-webkit-text-stroke:0.15px #111">Background Jobs</div>
<div class="t" style="left:46.7px;top:66.60px;font-size:7.4px;line-height:8.50px;color:#555;transform:scaleX(0.903)">Terminal 1</div>
<div class="t" style="left:593.9px;top:50.82px;font-size:7.6px;line-height:8.73px;color:#111;transform:scaleX(0.894);font-weight:bold;-webkit-text-stroke:0.15px #111">Environment</div>
<div class="t" style="left:647.6px;top:50.82px;font-size:7.6px;line-height:8.73px;color:#111;transform:scaleX(0.894);font-weight:bold;-webkit-text-stroke:0.15px #111">History</div>
<div class="t" style="left:683px;top:50.82px;font-size:7.6px;line-height:8.73px;color:#111;transform:scaleX(0.870);font-weight:bold;-webkit-text-stroke:0.15px #111">Connections</div>
<div class="t" style="left:735.4px;top:50.82px;font-size:7.6px;line-height:8.73px;color:#111;transform:scaleX(0.902);font-weight:bold;-webkit-text-stroke:0.15px #111">Tutorial</div>
<div class="t" style="left:594px;top:272.02px;font-size:7.6px;line-height:8.73px;color:#111;transform:scaleX(0.826);font-weight:bold;-webkit-text-stroke:0.15px #111">Files</div>
<div class="t" style="left:620px;top:272.02px;font-size:7.6px;line-height:8.73px;color:#111;transform:scaleX(0.862);font-weight:bold;-webkit-text-stroke:0.15px #111">Plots</div>
<div class="t" style="left:647.7px;top:272.02px;font-size:7.6px;line-height:8.73px;color:#111;transform:scaleX(0.853);font-weight:bold;-webkit-text-stroke:0.15px #111">Packages</div>
<div class="t" style="left:689.2px;top:272.02px;font-size:7.6px;line-height:8.73px;color:#111;transform:scaleX(0.948);font-weight:bold;-webkit-text-stroke:0.15px #111">Help</div>
<div class="t" style="left:716.2px;top:272.02px;font-size:7.6px;line-height:8.73px;color:#111;transform:scaleX(0.916);font-weight:bold;-webkit-text-stroke:0.15px #111">Viewer</div>
<div class="t" style="left:750.4px;top:272.02px;font-size:7.6px;line-height:8.73px;color:#111;transform:scaleX(0.896);font-weight:bold;-webkit-text-stroke:0.15px #111">Presentation</div>
<div class="t" style="left:606px;top:287.82px;font-size:7.6px;line-height:8.73px;color:#444;transform:scaleX(0.889)">New Folder</div>
<div class="t" style="left:665.4px;top:287.82px;font-size:7.6px;line-height:8.73px;color:#444;transform:scaleX(0.881)">New Blank File</div>
<div class="t" style="left:740.6px;top:287.82px;font-size:7.6px;line-height:8.73px;color:#444;transform:scaleX(0.920)">Delete</div>
<div class="t" style="left:780.7px;top:287.82px;font-size:7.6px;line-height:8.73px;color:#444;transform:scaleX(0.861)">Rename</div>
<div class="t" style="left:830px;top:287.82px;font-size:7.6px;line-height:8.73px;color:#444;transform:scaleX(0.942)">More</div>
<div class="t" style="left:619.6px;top:300.47px;font-size:7.0px;line-height:8.04px;color:#3c64a6;transform:scaleX(0.980)">Home</div>
<div class="t" style="left:635.9px;top:313.37px;font-size:7.1px;line-height:8.16px;color:#707070;transform:scaleX(0.962)">Name</div>
<div class="t" style="left:924.2px;top:313.37px;font-size:7.1px;line-height:8.16px;color:#707070;transform:scaleX(0.877)">Size</div>
<div class="t" style="left:975px;top:313.37px;font-size:7.1px;line-height:8.16px;color:#707070;transform:scaleX(1.018)">Modified</div>
<div class="t" style="left:625.6px;top:326.30px;font-size:8.4px;line-height:9.65px;color:#36388a;transform:scaleX(0.898)">BookxNote Pro</div>
<div class="t" style="left:625.6px;top:341.07px;font-size:8.4px;line-height:9.65px;color:#36388a;transform:scaleX(0.912)">desktop.ini</div>
<div class="t" style="left:924.7px;top:340.87px;font-size:8.4px;line-height:9.65px;color:#333;transform:scaleX(0.868)">402 B</div>
<div class="t" style="left:975.9px;top:340.87px;font-size:8.4px;line-height:9.65px;color:#333;transform:scaleX(0.872)">Mar 28, 2024, 6:18 PM</div>
<div class="t" style="left:625.6px;top:355.84px;font-size:8.4px;line-height:9.65px;color:#36388a;transform:scaleX(0.863)">FastViewCloudService</div>
<div class="t" style="left:625.6px;top:370.61px;font-size:8.4px;line-height:9.65px;color:#36388a;transform:scaleX(0.925)">hwinfo.ini</div>
<div class="t" style="left:924.7px;top:370.41px;font-size:8.4px;line-height:9.65px;color:#333;transform:scaleX(0.853)">56 B</div>
<div class="t" style="left:975.9px;top:370.41px;font-size:8.4px;line-height:9.65px;color:#333;transform:scaleX(0.853)">Jul 31, 2024, 3:18 PM</div>
<div class="t" style="left:625.6px;top:385.38px;font-size:8.4px;line-height:9.65px;color:#36388a;transform:scaleX(0.837)">JDM</div>
<div class="t" style="left:625.6px;top:400.15px;font-size:8.4px;line-height:9.65px;color:#36388a;transform:scaleX(0.901)">KingsoftData</div>
<div class="t" style="left:625.6px;top:414.92px;font-size:8.4px;line-height:9.65px;color:#36388a;transform:scaleX(0.831)">KOOK</div>
<div class="t" style="left:625.6px;top:429.69px;font-size:8.4px;line-height:9.65px;color:#36388a;transform:scaleX(0.832)">LCEDA-Pro</div>
<div class="t" style="left:625.6px;top:444.46px;font-size:8.4px;line-height:9.65px;color:#36388a;transform:scaleX(0.913)">My Music</div>
<div class="t" style="left:625.6px;top:459.23px;font-size:8.4px;line-height:9.65px;color:#36388a;transform:scaleX(0.885)">My Pictures</div>
<div class="t" style="left:625.6px;top:474.00px;font-size:8.4px;line-height:9.65px;color:#36388a;transform:scaleX(0.906)">My Videos</div>
<div class="t" style="left:625.6px;top:488.77px;font-size:8.4px;line-height:9.65px;color:#36388a;transform:scaleX(0.918)">NetpowerWallpaper</div>
<div class="t" style="left:625.6px;top:503.54px;font-size:8.4px;line-height:9.65px;color:#36388a;transform:scaleX(0.951)">Output</div>
<div class="t" style="left:625.6px;top:518.31px;font-size:8.4px;line-height:9.65px;color:#36388a;transform:scaleX(0.863)">RainClassroom</div>
<div class="t" style="left:625.6px;top:533.08px;font-size:8.4px;line-height:9.65px;color:#36388a;transform:scaleX(0.861)">ScreenRecorderLeClient</div>
<div class="t" style="left:625.6px;top:547.85px;font-size:8.4px;line-height:9.65px;color:#36388a;transform:scaleX(0.883)">Source Insight 4.0</div>
<div class="t" style="left:625.6px;top:562.62px;font-size:8.4px;line-height:9.65px;color:#36388a;transform:scaleX(0.861)">Tencent Files</div>
<div class="t" style="left:625.6px;top:577.39px;font-size:8.4px;line-height:9.65px;color:#36388a;transform:scaleX(0.847)">WPSDrive</div>
<div class="t" style="left:625.6px;top:592.16px;font-size:8.4px;line-height:9.65px;color:#36388a;transform:scaleX(0.936)">yidongbangong</div>
<div class="t" style="left:625.6px;top:606.93px;font-size:8.4px;line-height:9.65px;color:#36388a;transform:scaleX(0.870)">YYNote</div>
<div class="t" style="left:625.6px;top:621.70px;font-size:8.4px;line-height:9.65px;color:#36388a;transform:scaleX(0.835)">ZPert</div>
</body></html>
